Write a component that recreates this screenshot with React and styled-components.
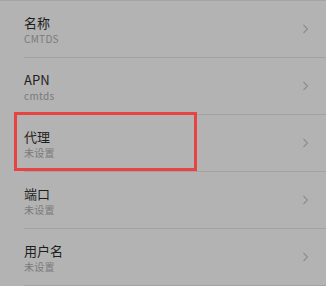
import React from 'react';
import styled, { createGlobalStyle } from 'styled-components';

const GlobalStyle = createGlobalStyle`
  html, body {
    margin: 0;
    padding: 0;
    background: #b3b3b3;
  }
  body {
    font-family: "Noto Sans CJK SC", "Liberation Sans", sans-serif;
  }
`;

const Page = styled.div`
  width: 326px;
  height: 286px;
  background: #b3b3b3;
  border-top: 1px solid #a4a4a4;
  box-sizing: border-box;
  overflow: hidden;
  display: flex;
  flex-direction: column;
`;

const Row = styled.div`
  position: relative;
  height: 57px;
  flex-shrink: 0;
  margin-left: 24px;
  padding-right: 17px;
  display: flex;
  align-items: center;
  justify-content: space-between;
  border-bottom: 1px solid #a2a2a2;
  box-sizing: border-box;
`;

const Highlight = styled.div`
  position: absolute;
  left: -10px;
  top: -3px;
  width: 183px;
  height: 59px;
  border: 3px solid #e84343;
  box-sizing: border-box;
  pointer-events: none;
`;

const Info = styled.div`
  display: flex;
  flex-direction: column;
  gap: 1px;
  padding-top: 2px;
`;

const Title = styled.span`
  font-size: 13px;
  line-height: 16px;
  color: #1e1e1e;
`;

const Sub = styled.span`
  font-size: 10px;
  line-height: 13px;
  color: #7a7a7a;
  letter-spacing: 0.3px;
`;

const Chevron = () => (
  <svg width="7" height="10" viewBox="0 0 7 10">
    <path d="M1.5 1 L5.5 5 L1.5 9" fill="none" stroke="#8c8c8c" strokeWidth="1.1" />
  </svg>
);

const items = [
  { title: '名称', sub: 'CMTDS' },
  { title: 'APN', sub: 'cmtds' },
  { title: '代理', sub: '未设置', marked: true },
  { title: '端口', sub: '未设置' },
  { title: '用户名', sub: '未设置' },
];

export default function App() {
  return (
    <>
      <GlobalStyle />
      <Page>
        {items.map((item) => (
          <Row key={item.title}>
            {item.marked && <Highlight />}
            <Info>
              <Title>{item.title}</Title>
              <Sub>{item.sub}</Sub>
            </Info>
            <Chevron />
          </Row>
        ))}
      </Page>
    </>
  );
}
